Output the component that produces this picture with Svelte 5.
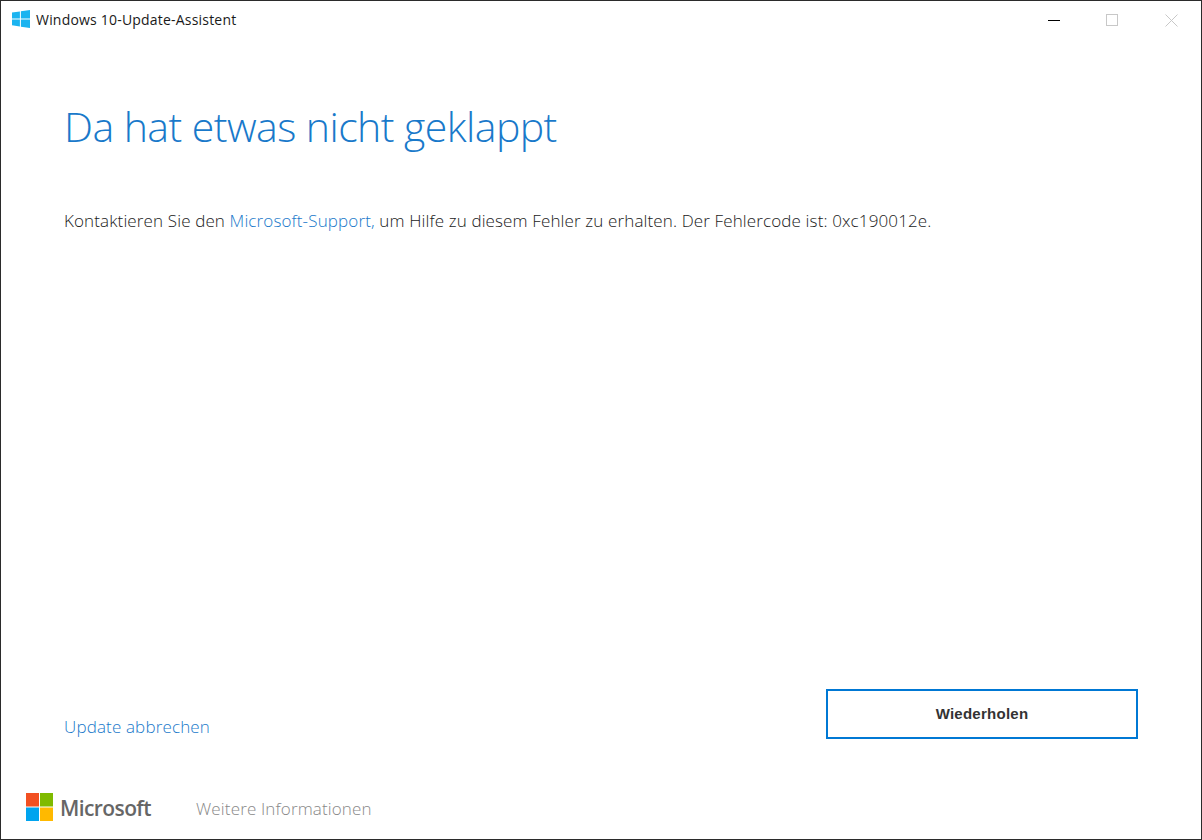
<script>
	const title = 'Windows 10-Update-Assistent';
</script>

<div class="window">
	<header class="titlebar">
		<svg class="winlogo" width="18" height="18" viewBox="0 0 18 18" aria-hidden="true">
			<path fill="#1bb4f0" d="M0 2.6 7.9 1.4V8.4H0ZM8.9 1.3 18 0V8.4H8.9ZM0 9.4H7.9V16.5L0 15.3ZM8.9 9.4H18V18L8.9 16.7Z" />
		</svg>
		<span class="apptitle">{title}</span>
		<div class="controls">
			<button type="button" aria-label="Minimieren"><span class="min"></span></button>
			<button type="button" aria-label="Maximieren"><span class="max"></span></button>
			<button class="close" type="button" aria-label="Schließen">
				<svg width="13" height="13" viewBox="0 0 13 13"><path d="M.5.5l12 12M12.5.5l-12 12" stroke="#c8c8c8" fill="none" /></svg>
			</button>
		</div>
	</header>

	<main class="content">
		<h1>Da hat etwas nicht geklappt</h1>
		<p class="message">
			Kontaktieren Sie den <a href="#support">Microsoft-Support,</a> um Hilfe zu diesem Fehler zu erhalten. Der Fehlercode ist: 0xc190012e.
		</p>
		<div class="actions">
			<a class="cancel" href="#cancel">Update abbrechen</a>
			<button class="retry" type="button">Wiederholen</button>
		</div>
	</main>

	<footer class="footer">
		<div class="brand">
			<svg width="27" height="28" viewBox="0 0 27 28" aria-hidden="true">
				<rect width="13" height="13.5" fill="#f25022" />
				<rect x="14" width="13" height="13.5" fill="#7fba00" />
				<rect y="14.5" width="13" height="13.5" fill="#00a4ef" />
				<rect x="14" y="14.5" width="13" height="13.5" fill="#ffb900" />
			</svg>
			<span class="wordmark">Microsoft</span>
		</div>
		<a class="more" href="#more">Weitere Informationen</a>
	</footer>
</div>

<style>
	:global(body) {
		margin: 0;
		background: #fff;
	}

	.window {
		box-sizing: border-box;
		width: 1202px;
		height: 840px;
		border: 1px solid #2b2b2b;
		display: flex;
		flex-direction: column;
		background: #fff;
		font-family: 'Open Sans', sans-serif;
	}

	.titlebar {
		display: flex;
		align-items: center;
		height: 38px;
		padding-left: 11px;
		flex: none;
	}

	.winlogo {
		margin-right: 6px;
		margin-top: -3px;
	}

	.apptitle {
		font-size: 14px;
		color: #1a1a1a;
		margin-top: -1px;
		letter-spacing: 0.2px;
	}

	.controls {
		margin-left: auto;
		display: flex;
	}

	.controls button {
		width: 58px;
		height: 38px;
		padding: 0;
		border: 0;
		background: none;
		display: flex;
		align-items: center;
		justify-content: center;
	}

	.controls .close {
		width: 60px;
	}

	.min {
		display: block;
		width: 12px;
		height: 1px;
		background: #000;
	}

	.max {
		display: block;
		box-sizing: border-box;
		width: 12px;
		height: 12px;
		border: 1px solid #c8c8c8;
	}

	.content {
		flex: 1;
		display: flex;
		flex-direction: column;
		padding: 0 63px 0 63px;
		min-height: 0;
	}

	h1 {
		margin: 57px 0 0;
		font-size: 41px;
		line-height: 60px;
		font-weight: 300;
		color: #1979ca;
		letter-spacing: -0.55px;
	}

	.message {
		margin: 53px 0 0;
		font-size: 17px;
		line-height: 24px;
		font-weight: 300;
		color: #1a1a1a;
		letter-spacing: 0.13px;
		white-space: nowrap;
	}

	.message a,
	.cancel {
		color: #1979ca;
		text-decoration: none;
	}

	.actions {
		margin-top: auto;
		display: flex;
		align-items: flex-end;
		justify-content: space-between;
		margin-bottom: 45px;
	}

	.cancel {
		font-size: 17px;
		font-weight: 300;
		line-height: 24px;
		letter-spacing: 0.15px;
	}

	.retry {
		box-sizing: border-box;
		width: 312px;
		height: 50px;
		padding: 0 0 2px;
		border: 2px solid #0078d4;
		background: #fff;
		font-family: 'Liberation Sans', sans-serif;
		font-size: 15px;
		font-weight: 700;
		letter-spacing: 0.25px;
		color: #333;
	}

	.footer {
		flex: none;
		display: flex;
		align-items: center;
		height: 55px;
		padding: 0 0 7px 25px;
		box-sizing: border-box;
		gap: 45px;
	}

	.brand {
		display: flex;
		align-items: center;
		gap: 7px;
	}

	.brand svg {
		margin-top: -2px;
	}

	.wordmark {
		font-size: 21px;
		font-weight: 600;
		color: #666;
		letter-spacing: -0.6px;
	}

	.more {
		font-size: 17px;
		font-weight: 300;
		color: #888;
		text-decoration: none;
		letter-spacing: 0.14px;
	}
</style>
